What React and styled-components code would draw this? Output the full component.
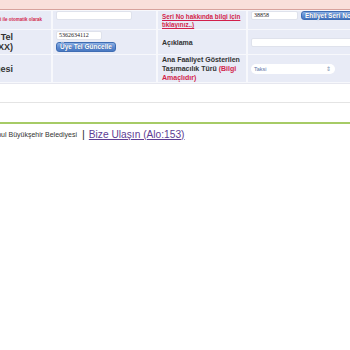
import React from 'react';
import styled, { createGlobalStyle } from 'styled-components';

const GlobalStyle = createGlobalStyle`
    html, body {
        margin: 0;
        padding: 0;
        background: #ffffff;
        overflow: hidden;
    }
    body {
        font-family: "Liberation Sans", Arial, sans-serif;
        color: #333333;
    }
`;

const Notice = styled.div`
    height: 9px;
    background-color: #f9dfdb;
    border-bottom: 1px solid #d7a29d;
`;

// the page is scrolled sideways: its left part is off screen
const Page = styled.div`
    width: 620px;
    margin-left: -120px;
`;

const FormTable = styled.table`
    width: 522px;
    table-layout: fixed;
    border-collapse: separate;
    border-spacing: 2px 1px;
    background: #f7f8fc;
`;

const Row = styled.tr`
    height: ${props => props.h}px;
`;

const Cell = styled.td`
    background-color: #e8ebf6;
    padding: ${props => props.pad || '0 3px'};
    vertical-align: ${props => props.top ? 'top' : 'middle'};
    font-size: 7px;
`;

const LabelCell = styled(Cell)`
    text-align: right;
    padding: 0 4px 0 2px;
    font-weight: bold;
    line-height: 9px;
    color: #333;
`;

const LabelText = styled.span`
    display: block;
    font-size: 9px;
    line-height: 10px;
    margin-right: 34px;
`;

const Note = styled.span`
    display: block;
    font-size: 4.5px;
    line-height: 6px;
    color: #d21f4b;
    margin-right: 5px;
`;

const SideLabel = styled(Cell)`
    font-weight: bold;
    font-size: 7px;
    line-height: 9px;
    color: #333;
    padding: 0 4px 0 4px;
`;

const Red = styled.span`
    color: #d21f4b;
`;

const InfoLink = styled.a`
    display: block;
    color: #d21f4b;
    font-size: 6.3px;
    line-height: 8px;
    font-weight: bold;
    text-decoration: underline;
    padding-top: 2px;
`;

const Field = styled.div`
    display: flex;
    align-items: center;
    gap: 3px;
`;

const Stack = styled.div`
    display: flex;
    flex-direction: column;
    align-items: flex-start;
    gap: 2px;
    padding-top: 1px;
`;

const TextInput = styled.div`
    box-sizing: border-box;
    width: ${props => props.w}px;
    height: 9px;
    background: #ffffff;
    border: 1px solid #dfe2ec;
    border-radius: 2px;
    font-family: "Liberation Serif", "Times New Roman", serif;
    font-size: 6px;
    line-height: 7px;
    padding-left: 2px;
    color: #222;
`;

const BlueButton = styled.div`
    flex: none;
    box-sizing: border-box;
    height: ${props => props.h || 10}px;
    padding: 0 3px;
    border: 1px solid #3f6db3;
    border-radius: 3px;
    background: linear-gradient(#8fb3e6, #5d8ad0 55%, #4a79c2);
    color: #ffffff;
    font-weight: bold;
    font-size: 6.5px;
    line-height: ${props => (props.h || 10) - 2}px;
    white-space: nowrap;
    text-shadow: 0 0 1px #2f5590;
`;

const Select = styled.div`
    box-sizing: border-box;
    width: 84px;
    height: 10px;
    display: flex;
    align-items: center;
    justify-content: space-between;
    padding: 0 4px 0 3px;
    background: #ffffff;
    border-radius: 5px;
    font-size: 5.5px;
    color: #5a74a8;
`;

const Arrows = styled.span`
    font-size: 6px;
    color: #7d8fb2;
`;

const Rule = styled.div`
    height: 1px;
    background: ${props => props.color};
    margin-top: ${props => props.gap}px;
`;

const GreenRule = styled.div`
    height: 2px;
    background: #a6cb66;
    margin-top: 19px;
`;

const Footer = styled.div`
    display: flex;
    align-items: center;
    height: 20px;
    padding-left: 102px;
    white-space: nowrap;
`;

const Copy = styled.span`
    font-size: 7px;
    color: #333;
`;

const Sep = styled.span`
    font-size: 11px;
    color: #333;
    margin: 0 4px 0 5px;
`;

const ContactLink = styled.a`
    font-size: 10.2px;
    color: #5e3d94;
    text-decoration: underline;
`;

export default function App() {
    return (
        <>
            <GlobalStyle />
            <Notice />
            <Page>
                <FormTable>
                    <colgroup>
                        <col style={{ width: 169 }} />
                        <col style={{ width: 103 }} />
                        <col style={{ width: 88 }} />
                        <col />
                    </colgroup>
                    <tbody>
                        <Row h={16}>
                            <LabelCell>
                                <Note>Ehliyet bilgi ile otomatik olarak</Note>
                            </LabelCell>
                            <Cell top>
                                <TextInput w={76} />
                            </Cell>
                            <SideLabel top>
                                <InfoLink>Seri No hakkında bilgi için tıklayınız..)</InfoLink>
                            </SideLabel>
                            <Cell top>
                                <Field>
                                    <TextInput w={47}>38858</TextInput>
                                    <BlueButton h={9}>Ehliyet Seri No Sorgula</BlueButton>
                                </Field>
                            </Cell>
                        </Row>
                        <Row h={24}>
                            <LabelCell>
                                <LabelText>Üye Cep Tel</LabelText>
                                <LabelText>(05XX)</LabelText>
                            </LabelCell>
                            <Cell top>
                                <Stack>
                                    <TextInput w={46}>5362634112</TextInput>
                                    <BlueButton>Üye Tel Güncelle</BlueButton>
                                </Stack>
                            </Cell>
                            <SideLabel>Açıklama</SideLabel>
                            <Cell>
                                <TextInput w={120} />
                            </Cell>
                        </Row>
                        <Row h={26}>
                            <LabelCell>
                                <LabelText>Ruhsat Belgesi</LabelText>
                            </LabelCell>
                            <Cell />
                            <SideLabel>
                                Ana Faaliyet Gösterilen Taşımacılık Türü <Red>(Bilgi Amaçlıdır)</Red>
                            </SideLabel>
                            <Cell>
                                <Select>
                                    <span>Taksi</span>
                                    <Arrows>⇕</Arrows>
                                </Select>
                            </Cell>
                        </Row>
                    </tbody>
                </FormTable>
                <Rule color="#e6e7ef" gap={0} />
                <Rule color="#e4e4e4" gap={18} />
                <GreenRule />
                <Footer>
                    <Copy>İstanbul Büyükşehir Belediyesi</Copy>
                    <Sep>|</Sep>
                    <ContactLink>Bize Ulaşın (Alo:153)</ContactLink>
                </Footer>
            </Page>
        </>
    );
}
